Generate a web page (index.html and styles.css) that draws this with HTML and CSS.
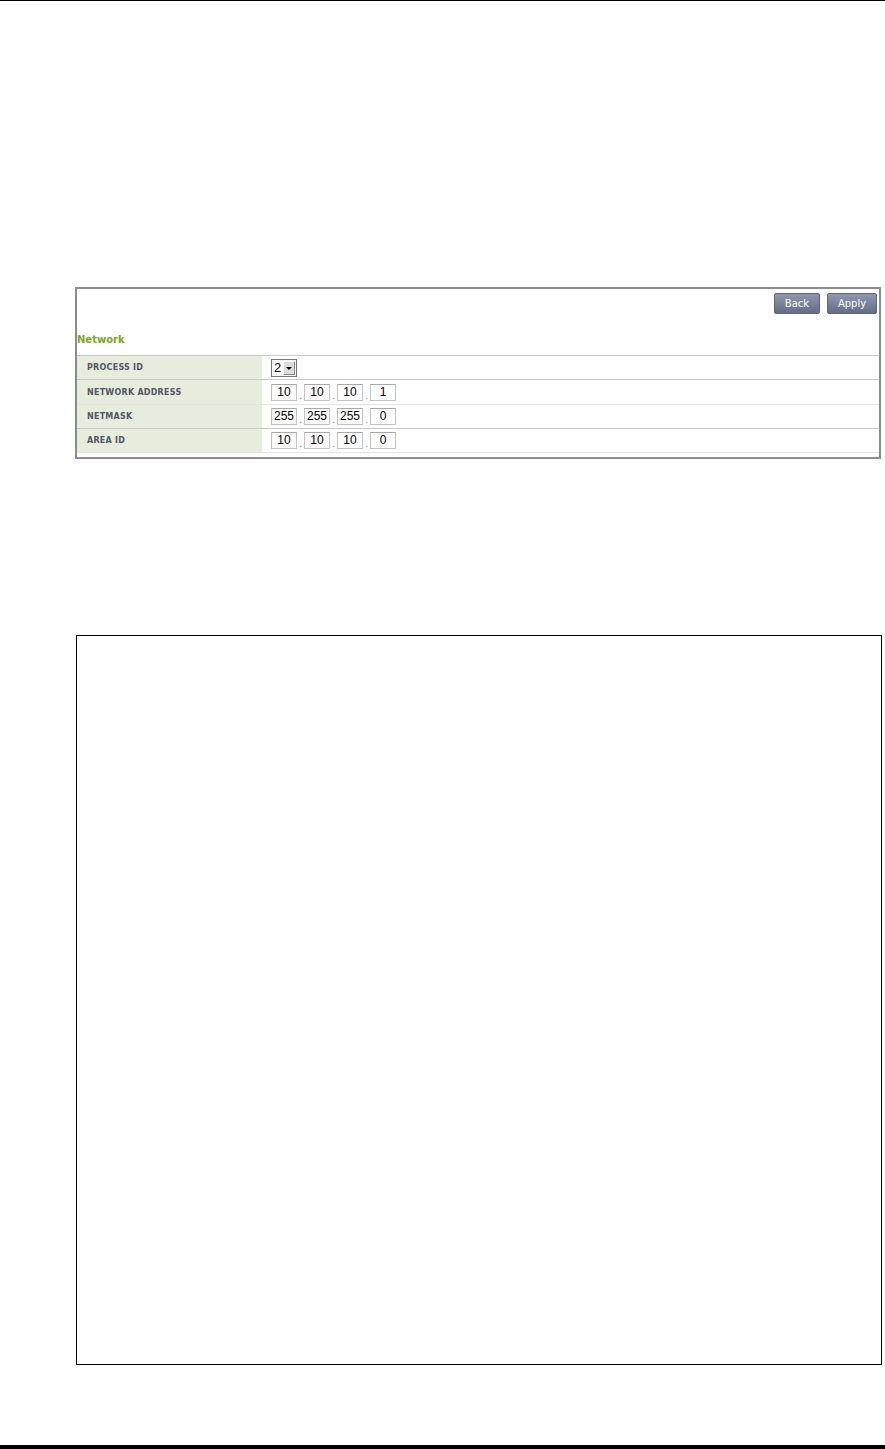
FILE: index.html
```html
<!DOCTYPE html>
<html lang="en">
<head>
  <meta charset="UTF-8" />
  <title>OSPF Network</title>
  <link rel="stylesheet" href="styles.css">
</head>
<body>
  <div class="page">
    <div class="rule-top"></div>

    <div class="content">
      <div class="panel">
        <div class="toolbar">
          <button class="btn" type="button">Back</button>
          <button class="btn" type="button">Apply</button>
        </div>
        <div class="panel-title">Network</div>

        <table class="form-table">
          <tr>
            <th>PROCESS ID</th>
            <td>
              <span class="combo"><span class="combo-val">2</span><span class="combo-btn"></span></span>
            </td>
          </tr>
          <tr>
            <th>NETWORK ADDRESS</th>
            <td>
              <div class="ip">
                <span class="octet">10</span><span class="dot">.</span>
                <span class="octet">10</span><span class="dot">.</span>
                <span class="octet">10</span><span class="dot">.</span>
                <span class="octet">1</span>
              </div>
            </td>
          </tr>
          <tr>
            <th>NETMASK</th>
            <td>
              <div class="ip">
                <span class="octet">255</span><span class="dot">.</span>
                <span class="octet">255</span><span class="dot">.</span>
                <span class="octet">255</span><span class="dot">.</span>
                <span class="octet">0</span>
              </div>
            </td>
          </tr>
          <tr>
            <th>AREA ID</th>
            <td>
              <div class="ip">
                <span class="octet">10</span><span class="dot">.</span>
                <span class="octet">10</span><span class="dot">.</span>
                <span class="octet">10</span><span class="dot">.</span>
                <span class="octet">0</span>
              </div>
            </td>
          </tr>
        </table>
      </div>

      <div class="blank-frame"></div>
    </div>

    <div class="rule-bottom"></div>
  </div>
</body>
</html>
```

FILE: styles.css
```css
body {
  margin: 0;
  background: #fff;
  font-family: 'DejaVu Sans', Verdana, sans-serif;
  color: #000;
}
.page {
  min-height: 100vh;
  display: flex;
  flex-direction: column;
}
.rule-top {
  border-top: 1px solid #000;
}
.rule-bottom {
  margin-top: auto;
  height: 4px;
  background: #000;
}
.content {
  padding: 0 4px 0 75px;
}

/* settings panel */
.panel {
  margin-top: 286px;
  width: 802px;
  border: 2px solid #8c8c8c;
  padding-bottom: 4px;
}
.toolbar {
  display: flex;
  justify-content: flex-end;
  gap: 7px;
  padding: 4px 2px 0 0;
}
.btn {
  height: 21px;
  padding: 0;
  border: 1px solid #5d6579;
  border-radius: 2px;
  background: linear-gradient(#8f98b0, #646d88);
  color: #fff;
  font-family: 'DejaVu Sans', Verdana, sans-serif;
  font-size: 10px;
  cursor: pointer;
}
.btn:first-child { width: 46px; }
.btn:last-child { width: 50px; }

.panel-title {
  margin: 20px 0 0 0;
  height: 21px;
  font-size: 10px;
  font-weight: bold;
  color: #7aa91e;
}

.form-table {
  width: 802px;
  border-collapse: collapse;
  border-top: 1px solid #c8c8c8;
}
.form-table th {
  width: 175px;
  height: 23px;
  padding: 0 0 0 10px;
  background: #e7eddc;
  text-align: left;
  font-size: 8px;
  font-weight: bold;
  letter-spacing: 0.25px;
  color: #52566a;
}
.form-table td {
  padding: 0 0 0 9px;
  height: 23px;
}
.form-table tr { border-bottom: 1px solid #c8c8c8; }
.form-table tr:nth-child(even) { border-bottom-color: #e4e4e4; }
.form-table tr:nth-child(2) td, .form-table tr:nth-child(2) th { height: 24px; }

/* ip address fields */
.ip {
  display: flex;
  align-items: flex-end;
}
.octet {
  width: 24px;
  height: 15px;
  border: 1px solid #c3c3c3;
  border-top-color: #a8a8a8;
  font-family: 'Liberation Sans', Arial, sans-serif;
  font-size: 12px;
  line-height: 15px;
  text-align: center;
  color: #000;
}
.dot {
  width: 7px;
  text-align: center;
  font-family: 'Liberation Sans', Arial, sans-serif;
  font-size: 11px;
  line-height: 12px;
  color: #9a9a9a;
}

/* dropdown */
.combo {
  display: inline-flex;
  width: 24px;
  height: 16px;
  border: 1px solid #7a7a7a;
  vertical-align: middle;
}
.combo-val {
  flex: 1;
  padding-left: 2px;
  font-family: 'Liberation Sans', Arial, sans-serif;
  font-size: 13px;
  line-height: 16px;
}
.combo-btn {
  position: relative;
  width: 12px;
  margin: 1px;
  background: #dcdcdc;
  border: 1px solid #fff;
  border-right-color: #888;
  border-bottom-color: #888;
  box-sizing: border-box;
}
.combo-btn::after {
  content: "";
  position: absolute;
  left: 2px;
  top: 5px;
  border-left: 3px solid transparent;
  border-right: 3px solid transparent;
  border-top: 3px solid #000;
}

/* empty frame below */
.blank-frame {
  margin: 176px 0 0 1px;
  width: 804px;
  height: 728px;
  border: 1px solid #000;
}
```
